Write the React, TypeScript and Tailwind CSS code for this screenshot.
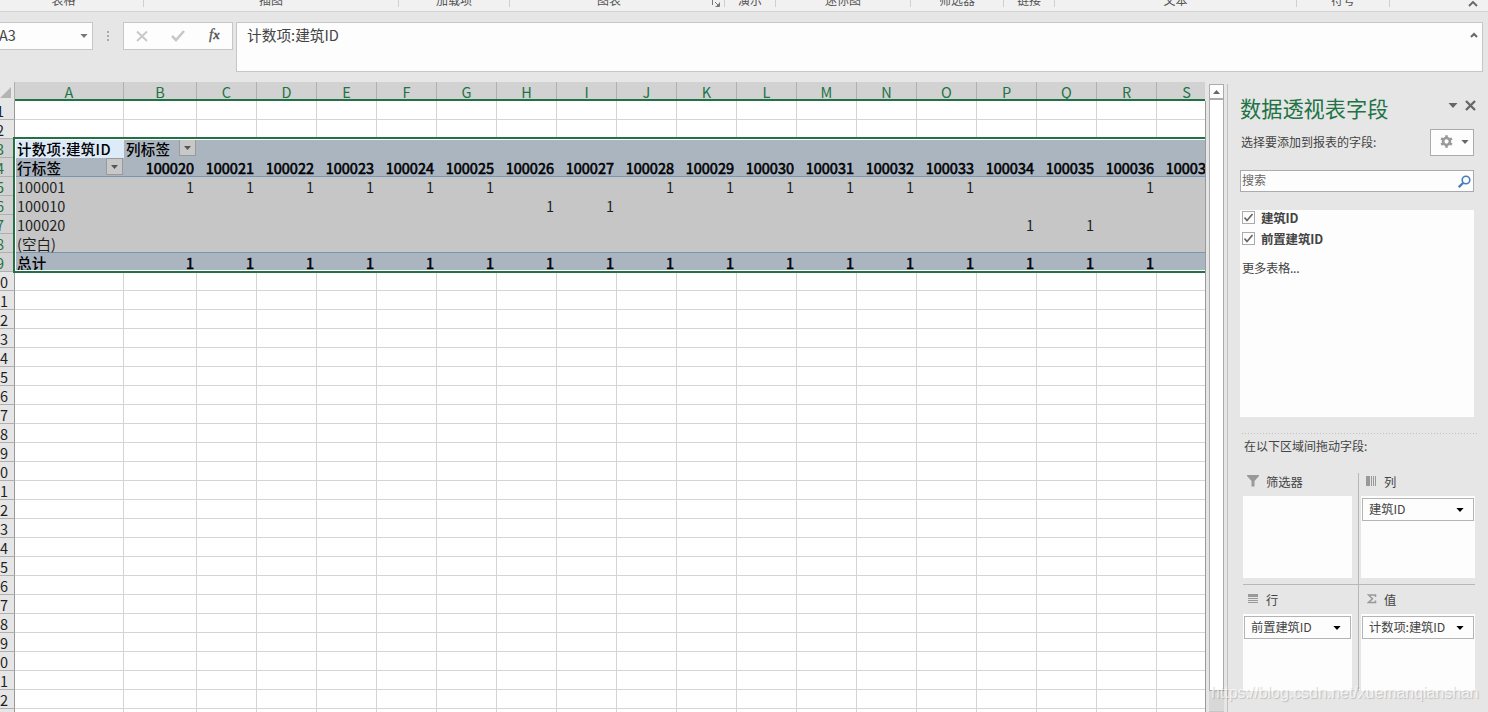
import type { ReactNode } from 'react';
import clsx from 'clsx';

const RIBBON_GROUPS = [
  { label: '表格', className: 'w-[144px] pr-4' },
  { label: '插图', className: 'w-[255px]' },
  { label: '加载项', className: 'w-[111px]' },
  { label: '图表', className: 'w-[215px] pr-4', launcher: true },
  { label: '演示', className: 'w-[51px]' },
  { label: '迷你图', className: 'w-[135px]' },
  { label: '筛选器', className: 'w-[93px]' },
  { label: '链接', className: 'w-[51px]' },
  { label: '文本', className: 'w-[242px]' },
  { label: '符号', className: 'w-[93px]' },
];

const COLUMNS = 'ABCDEFGHIJKLMNOPQRS'.split('');
const ROWS = Array.from({ length: 33 }, (_, i) => i + 1);

// Row number -> column letters that hold a 1
const ONES: Record<number, string> = {
  5: 'BCDEFGJKLMNOR',
  6: 'HI',
  7: 'PQ',
  9: 'BCDEFGHIJKLMNOPQR',
};

const ROW_LABELS: Record<number, string> = {
  3: '计数项:建筑ID',
  4: '行标签',
  5: '100001',
  6: '100010',
  7: '100020',
  8: '(空白)',
  9: '总计',
};

const colWidth = (col: string) => (col === 'A' ? 'w-[109px]' : col === 'B' ? 'w-[73px]' : 'w-[60px]');

function cellText(row: number, col: string) {
  if (col === 'A') return ROW_LABELS[row] ?? '';
  if (row === 3 && col === 'B') return '列标签';
  if (row === 4) return String(100020 + COLUMNS.indexOf(col) - 1);
  return ONES[row]?.includes(col) ? '1' : '';
}

function Caret({ className }: { className?: string }) {
  return (
    <svg viewBox="0 0 9 5" className={clsx('h-[5px] w-[9px] shrink-0', className)} fill="currentColor">
      <path d="M0 0h9L4.5 5z" />
    </svg>
  );
}

function FilterButton({ className }: { className?: string }) {
  return (
    <span
      className={clsx(
        'absolute flex h-[17px] w-[17px] items-center justify-center border border-[#9a9a9a] bg-[#c8c8c8] text-[#555]',
        className
      )}
    >
      <Caret className="!h-[4px] !w-[7px]" />
    </span>
  );
}

function Ribbon() {
  return (
    <div className="flex h-[12px] shrink-0 overflow-hidden border-b border-[#d2d2d2] bg-[#f1f1f1] text-[12px] leading-[16px] text-[#555]">
      {RIBBON_GROUPS.map((g) => (
        <div key={g.label} className={clsx('relative flex h-[7px] shrink-0 justify-center border-r border-[#d0d0d0]', g.className)}>
          <span className="-mt-[8px]">{g.label}</span>
          {g.launcher && (
            <svg viewBox="0 0 8 8" className="absolute right-[4px] top-[-1px] h-[8px] w-[8px]" fill="none" stroke="#777">
              <path d="M.5 6V.5H6M3 3l4 4M7.5 3.5v4h-4M6.500 5v1.500H5" />
            </svg>
          )}
        </div>
      ))}
      <div className="flex flex-1 justify-end pr-[10px]">
        <svg viewBox="0 0 10 7" className="h-[7px] w-[10px]" fill="none" stroke="#666" strokeWidth="1.8">
          <path d="M1 6l4-4 4 4" />
        </svg>
      </div>
    </div>
  );
}

function FormulaBar() {
  return (
    <div className="flex h-[70px] shrink-0 items-start pt-[10px] text-[#444]">
      <div className="flex h-[28px] w-[93px] items-center justify-between border border-l-0 border-[#c6c6c6] bg-[#fdfdfd] pr-[4px]">
        <span className="-ml-px -mt-[2px] text-[14.500px]">A3</span>
        <Caret className="!h-[4px] !w-[8px] text-[#777]" />
      </div>
      <div className="mt-[9px] flex w-[30px] flex-col items-center gap-[2px]">
        <i className="h-[2px] w-[2px] bg-[#aaa]" />
        <i className="h-[2px] w-[2px] bg-[#aaa]" />
        <i className="h-[2px] w-[2px] bg-[#aaa]" />
      </div>
      <div className="flex h-[28px] w-[110px] items-center border border-[#c6c6c6] bg-[#fdfdfd] pl-[12px]">
        <svg viewBox="0 0 12 12" className="h-[12px] w-[12px]" fill="none" stroke="#c8c8c8" strokeWidth="1.900">
          <path d="M1 1.500l10 9.500M11 1.500L1 11" />
        </svg>
        <svg viewBox="0 0 14 12" className="ml-[23px] h-[12px] w-[14px]" fill="none" stroke="#c8c8c8" strokeWidth="2.600">
          <path d="M1 6l4 4 8-9" />
        </svg>
        <span className="-mt-[3px] ml-[24px] font-['Liberation_Serif',serif] text-[15px] italic leading-none text-[#555] [-webkit-text-stroke:0.3px]">
          f<span className="text-[13px] font-bold">x</span>
        </span>
      </div>
      <div className="ml-[3px] flex h-[50px] w-[1247px] justify-between border border-[#c6c6c6] bg-[#fdfdfd] pl-[10px] pr-[4px]">
        <span className="pt-px text-[14.700px] leading-[22px]">计数项:建筑ID</span>
        <svg viewBox="0 0 8 6" className="mt-[9px] h-[6px] w-[8px]" fill="none" stroke="#666" strokeWidth="2">
          <path d="M1 5l3-3 3 3" />
        </svg>
      </div>
    </div>
  );
}

function Cell({ row, col }: { row: number; col: string }) {
  const selected = row >= 3 && row <= 9;
  const banded = row === 3 || row === 4 || row === 9;
  const leftAligned = col === 'A' || row === 3;
  return (
    <div
      className={clsx(
        'relative flex h-[19px] shrink-0 items-end whitespace-nowrap border-b',
        colWidth(col),
        !selected && 'border-r border-[#d4d4d4] bg-white',
        selected && (banded ? 'bg-[#abb5c0]' : 'bg-[#c6c6c6]'),
        selected && (row === 4 || row === 8 ? 'border-b-[#7896b4]' : 'border-b-transparent'),
        banded ? 'text-black' : 'text-[#1f1f1f]',
        leftAligned ? 'pl-[2px]' : 'justify-end pr-[3px]',
        row === 3 && col === 'A' && 'bg-[#dcebf7]'
      )}
    >
      <span
        className={clsx(
          'h-[18px] leading-[19px]',
          banded && leftAligned && 'font-medium tracking-[0.3px]',
          banded && !leftAligned && '[-webkit-text-stroke:0.6px]'
        )}
      >
        {cellText(row, col)}
      </span>
      {row === 3 && col === 'B' && <FilterButton className="right-[1px] top-0" />}
      {row === 4 && col === 'A' && <FilterButton className="right-[1px] top-0" />}
    </div>
  );
}

function Sheet() {
  return (
    <div className="relative w-[1206px] shrink-0 overflow-hidden text-[14.5px]">
      {/* Column headers */}
      <div className="flex h-[19px] w-[1205px] overflow-hidden">
        <div className="flex w-[15px] shrink-0 items-start justify-end border-r border-[#b0b0b0] pr-[3px] pt-[5px]">
          <svg viewBox="0 0 11 11" className="h-[11px] w-[11px] shrink-0" fill="#b4b4b4">
            <path d="M11 0v11H0z" />
          </svg>
        </div>
        {COLUMNS.map((col) => (
          <div
            key={col}
            className={clsx(
              'flex shrink-0 justify-center border-b-2 border-b-[#217346] bg-[#d2d2d2] leading-[20px] text-[#217346]',
              colWidth(col)
            )}
          >
            <span className="flex h-[17px] flex-1 justify-center border-r border-[#b0b0b0]">{col}</span>
          </div>
        ))}
      </div>

      {/* Rows */}
      <div className="h-[611px] w-[1206px] overflow-hidden border-r border-[#999]">
        {ROWS.map((row) => {
          const selected = row >= 3 && row <= 9;
          return (
            <div key={row} className="flex h-[19px]">
              <div
                className={clsx(
                  'flex w-[15px] shrink-0 overflow-hidden border-b border-r border-b-[#b0b0b0] border-r-[#999] leading-[20px]',
                  selected ? 'bg-[#d2d2d2] text-[#217346]' : 'bg-[#e6e6e6] text-[#1f1f1f]'
                )}
              >
                <span className="-ml-[15px] w-[30px] shrink-0 text-center">{row}</span>
              </div>
              {COLUMNS.map((col) => (
                <Cell key={col} row={row} col={col} />
              ))}
            </div>
          );
        })}
      </div>

      {/* Selection outline */}
      <div className="absolute left-[13px] top-[55px] h-[136px] w-[1192px] border-y-2 border-l-2 border-[#217346]">
        <div className="h-full border-y border-l border-white" />
      </div>
    </div>
  );
}

function ScrollBar() {
  return (
    <div className="ml-[3px] mt-[2px] flex w-[15px] shrink-0 flex-col">
      <div className="flex h-[15px] items-center justify-center border border-[#ababab] bg-[#fdfdfd] text-[#666]">
        <Caret className="!h-[4px] !w-[7px] rotate-180" />
      </div>
      <div className="h-[592px] border border-[#ababab] bg-white" />
      <div className="flex-1 border-b border-[#c6c6c6] bg-[#d8d8d8]" />
    </div>
  );
}

function FieldCheck({ label }: { label: string }) {
  return (
    <div className="flex h-[21px] items-start">
      <span className="mt-px flex h-[13px] w-[13px] items-center justify-center border border-[#ababab]">
        <svg viewBox="0 0 9 9" className="h-[9px] w-[9px]" fill="none" stroke="#666" strokeWidth="1.600">
          <path d="M.5 4.500l2.500 3L8.500 1" />
        </svg>
      </span>
      <span className="ml-[6px] text-[12.500px] font-bold leading-[16px] tracking-[-0.2px]">{label}</span>
    </div>
  );
}

function Area({ icon, title, field, className }: { icon: ReactNode; title: string; field?: string; className?: string }) {
  return (
    <div className={clsx('flex flex-col', className)}>
      <div className="flex h-[23px] shrink-0 items-start">
        <span className="ml-[4px] mt-[2px] flex w-[19px]">{icon}</span>
        <span className="leading-[19px]">{title}</span>
      </div>
      <div className="flex-1 bg-[#fdfdfd] px-px pt-[2px]">
        {field && (
          <div className="flex h-[23px] items-center justify-between border border-[#b4b4b4] pl-[6px] pr-[9px]">
            <span className="tracking-[-0.1px]">{field}</span>
            <Caret className="!h-[4px] !w-[8px] text-black" />
          </div>
        )}
      </div>
    </div>
  );
}

const filterIcon = (
  <svg viewBox="0 0 12 12" className="h-[12px] w-[12px]" fill="#999">
    <path d="M0 0h12v1L7.500 6v5.500h-3V6L0 1z" />
  </svg>
);
const columnsIcon = (
  <svg viewBox="0 0 10 10" className="ml-px mt-px h-[10px] w-[10px]" fill="#999">
    <path d="M0 0h4v10H0zM5 0h1v10H5zM7 0h1v10H7zM9 0h1v10H9z" />
  </svg>
);
const rowsIcon = (
  <svg viewBox="0 0 10 10" className="ml-px mt-px h-[10px] w-[10px]" fill="#999">
    <path d="M0 0h10v3H0zM0 4h10v1H0zM0 6h10v1H0zM0 8h10v1H0z" />
  </svg>
);
const sigmaIcon = (
  <svg viewBox="0 0 10 10" className="ml-[2px] mt-px h-[10px] w-[10px]" fill="none" stroke="#999" strokeWidth="1.500">
    <path d="M8.500 3V1H1.500l4 3.800-4 3.700h7v-2" />
  </svg>
);

function FieldsPane() {
  return (
    <div className="ml-[3px] mt-[2px] flex-1 border-l border-[#c0c0c0] pl-[12px] text-[12.300px] text-[#444]">
      <div className="flex h-[45px] items-start justify-between pr-[12px] pt-[9px]">
        <h2 className="text-[21.200px] leading-[29px] text-[#217346]">数据透视表字段</h2>
        <div className="mt-[7px] flex items-center gap-[7px] text-[#666]">
          <Caret className="!w-[10px]" />
          <svg viewBox="0 0 11 11" className="h-[11px] w-[11px]" fill="none" stroke="currentColor" strokeWidth="2.300">
            <path d="M1 1l9 9M10 1l-9 9" />
          </svg>
        </div>
      </div>
      <div className="flex h-[41px] items-start justify-between pr-[14px]">
        <span className="pl-px pt-[4px] text-[12px] leading-[18px]">选择要添加到报表的字段:</span>
        <div className="flex h-[27px] w-[44px] items-center justify-between border border-[#ababab] bg-[#fdfdfd] pl-[9px] pr-[4px]">
          <svg viewBox="0 0 14 14" className="-mt-[2px] h-[13px] w-[13px]" fill="none" stroke="#999">
            <circle cx="7" cy="7" r="3.700" strokeWidth="2.800" />
            <path d="M7 .3v2.700M7 11v2.700M1.200 3.600l2.400 1.400M10.400 9l2.400 1.400M1.200 10.400L3.600 9M10.400 5l2.400-1.400" strokeWidth="2.800" />
          </svg>
          <Caret className="-mt-px !h-[4px] !w-[8px] text-[#666]" />
        </div>
      </div>
      <div className="flex h-[22px] w-[234px] items-center justify-between border border-[#ababab] bg-[#fdfdfd] pl-[1px] pr-[2px]">
        <span className="-mt-[2px] text-[12px] text-[#666]">搜索</span>
        <svg viewBox="0 0 13 13" className="h-[13px] w-[13px]" fill="none" stroke="#4a7ebb">
          <circle cx="8" cy="5" r="3.800" strokeWidth="1.600" />
          <path d="M5.300 7.700L.8 12.200" strokeWidth="2.300" />
        </svg>
      </div>
      <div className="mt-[18px] h-[207px] w-[234px] bg-[#fdfdfd] pl-[2px]">
        <FieldCheck label="建筑ID" />
        <FieldCheck label="前置建筑ID" />
        <div className="mt-[7px] leading-[18px] tracking-[-0.3px]">更多表格...</div>
      </div>
      <div className="ml-[2px] mt-[16px] h-px w-[235px] bg-[repeating-linear-gradient(90deg,#c0c0c0_0_1px,transparent_1px_3px)]" />
      <div className="ml-[4px] mt-[3px] h-[36px] text-[12px] leading-[18px]">在以下区域间拖动字段:</div>
      <div className="ml-[3px] w-[232px]">
        <div className="flex h-[112px] border-b border-[#b8b8b8]">
          <div className="flex w-[116px] border-r border-[#b8b8b8] pb-[6px] pr-[6px]">
            <Area className="flex-1" icon={filterIcon} title="筛选器" />
          </div>
          <div className="flex flex-1 pb-[6px] pl-[2px]">
            <Area className="flex-1" icon={columnsIcon} title="列" field="建筑ID" />
          </div>
        </div>
        <div className="flex h-[106px]">
          <div className="flex w-[116px] border-r border-[#b8b8b8] pr-[6px] pt-[6px]">
            <Area className="flex-1" icon={rowsIcon} title="行" field="前置建筑ID" />
          </div>
          <div className="flex flex-1 pl-[2px] pt-[6px]">
            <Area className="flex-1" icon={sigmaIcon} title="值" field="计数项:建筑ID" />
          </div>
        </div>
      </div>
    </div>
  );
}

export default function App() {
  return (
    <div className="relative flex h-[712px] w-[1488px] flex-col overflow-hidden bg-[#e6e6e6] font-['Noto_Sans_CJK_SC',sans-serif]">
      <Ribbon />
      <FormulaBar />
      <div className="flex h-[630px]">
        <Sheet />
        <ScrollBar />
        <FieldsPane />
      </div>
      <span className="absolute left-[1211px] top-[683px] whitespace-nowrap font-['Liberation_Sans',sans-serif] text-[15.900px] leading-[20px] text-white/70 [text-shadow:1px_1px_1px_rgba(0,0,0,0.18)]">
        https://blog.csdn.net/xuemanqianshan
      </span>
    </div>
  );
}
